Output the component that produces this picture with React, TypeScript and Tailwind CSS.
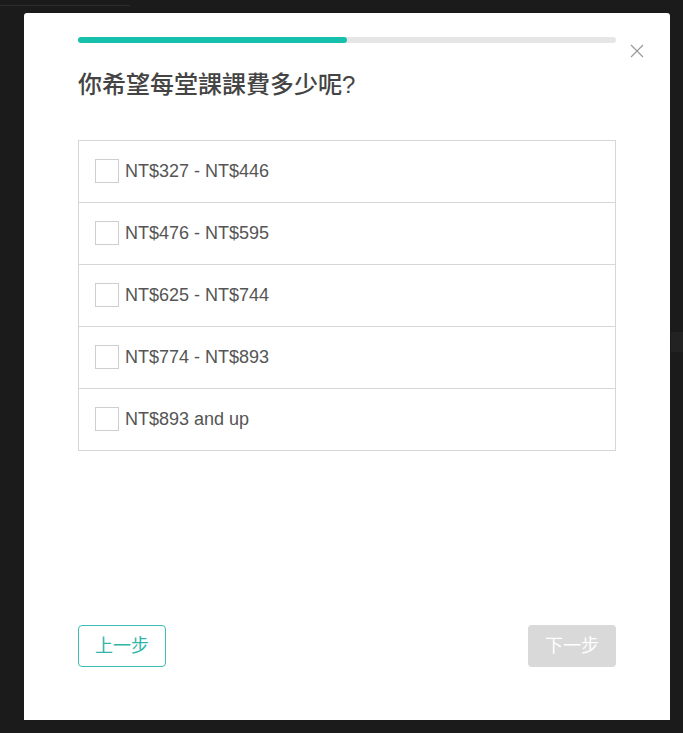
import { useState } from "react";

const options = [
  "NT$327 - NT$446",
  "NT$476 - NT$595",
  "NT$625 - NT$744",
  "NT$774 - NT$893",
  "NT$893 and up",
];

export default function App() {
  const [selected, setSelected] = useState<number[]>([]);

  const toggle = (i: number) => {
    setSelected((s) => (s.includes(i) ? s.filter((x) => x !== i) : [...s, i]));
  };

  return (
    <div
      className="relative h-[733px] w-[683px] overflow-hidden bg-[#1b1b1b]"
      style={{ fontFamily: '"Liberation Sans", "Noto Sans CJK TC", sans-serif' }}
    >
      {/* faint page behind the overlay */}
      <div className="absolute left-0 top-[5px] h-px w-[130px] bg-[#2c2c2c]"></div>
      <div className="absolute right-0 top-[332px] h-[20px] w-[12px] bg-[#222]"></div>

      <div className="pt-[13px] pl-6">
        <div className="relative flex h-[707px] w-[646px] flex-col rounded-t-[3px] bg-white px-[54px] pt-6 pb-[53px]">
          <button className="absolute right-[26px] top-[31px] text-[#999]">
            <svg width="14" height="14" viewBox="0 0 14 14" fill="none">
              <path d="M1 1L13 13M13 1L1 13" stroke="currentColor" strokeWidth="1.2" />
            </svg>
          </button>

          <div className="h-[6px] w-full rounded-full bg-[#e6e6e6]">
            <div className="h-full w-1/2 rounded-full bg-[#16c0ac]"></div>
          </div>

          <h2 className="mt-[26px] text-[24px] font-medium leading-[32px] text-[#444]">
            你希望每堂課課費多少呢?
          </h2>

          <div className="mt-[39px] border border-[#d6d6d6]">
            {options.map((o, i) => (
              <label
                key={o}
                className={`flex cursor-pointer items-center pl-4 ${
                  i > 0 ? "h-[62px] border-t border-[#d6d6d6]" : "h-[61px]"
                }`}
                onClick={() => toggle(i)}
              >
                <span
                  className={`-mt-px flex h-6 w-6 items-center justify-center border ${
                    selected.includes(i) ? "border-[#16c0ac] bg-[#16c0ac]" : "border-[#cfcfcf]"
                  }`}
                ></span>
                <span className="-mt-px ml-[6px] text-[18px] text-[#555]">{o}</span>
              </label>
            ))}
          </div>

          <div className="flex-1"></div>

          <div className="flex items-center justify-between">
            <button className="flex h-[42px] w-[88px] items-center justify-center rounded-[4px] border-[1.5px] border-[#3cbdb2] text-[18px] text-[#2fb5a9]">
              上一步
            </button>
            <button className="flex h-[42px] w-[88px] items-center justify-center rounded-[4px] bg-[#d9d9d9] text-[18px] text-white">
              下一步
            </button>
          </div>
        </div>
      </div>
    </div>
  );
}
